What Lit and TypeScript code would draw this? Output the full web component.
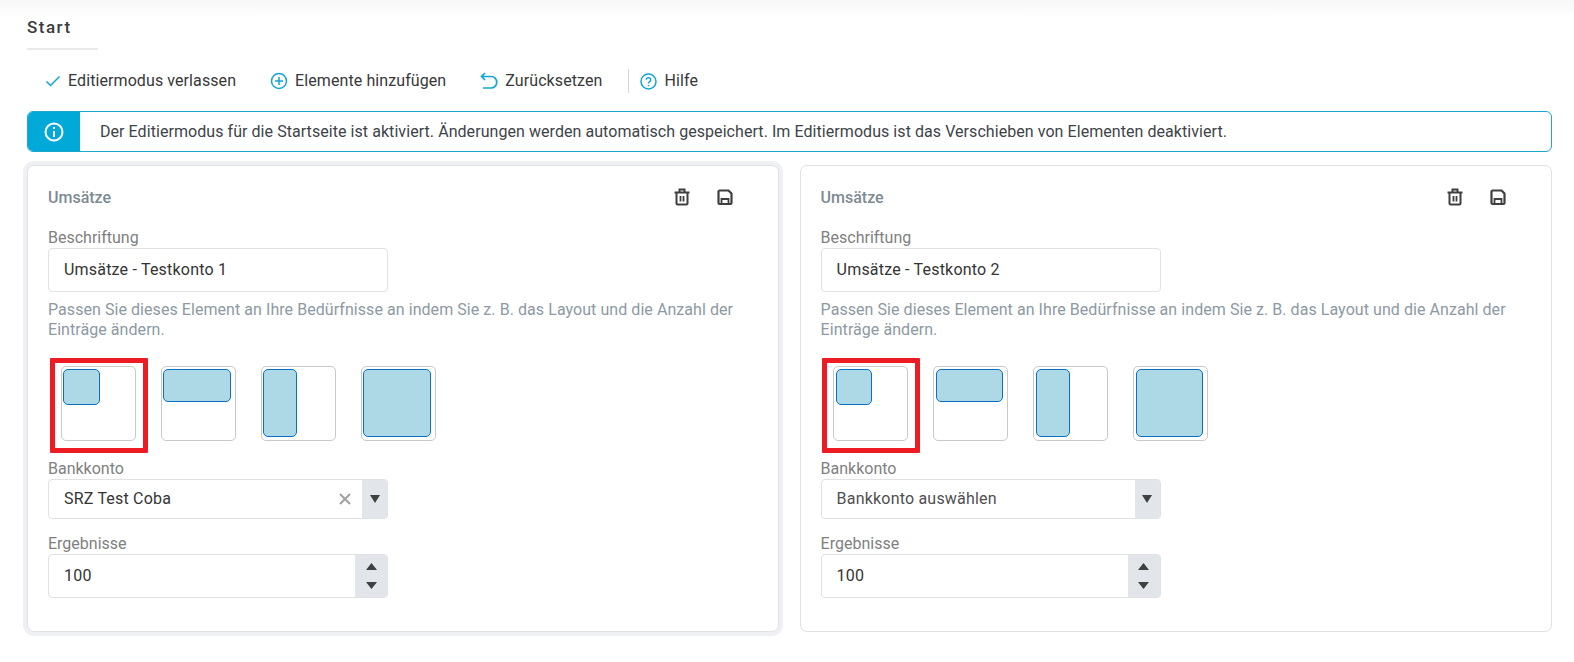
import { LitElement, html, css } from "lit";
import { customElement, property } from "lit/decorators.js";

const trash = html`<svg class="act" viewBox="0 0 18 18" width="18" height="18" fill="none" stroke="#3f3f3f" stroke-width="2"><path d="M1.500 4.500h15M6.500 4V1.500h5V4M3.500 5v10.500c0 .6.4 1 1 1h9c.6 0 1-.4 1-1V5" /><path d="M7.500 8v5.500M10.500 8v5.500" stroke-width="1.800"/></svg>`;
const save = html`<svg class="act" viewBox="0 0 18 18" width="18" height="18" fill="none" stroke="#3f3f3f" stroke-width="2.200"><path d="M3 2.500h9.500l3 3V15a1 1 0 0 1-1 1h-11a1 1 0 0 1-1-1V3.500a1 1 0 0 1 1-1Z"/><path d="M5.500 16v-5h7v5" stroke-width="1.800"/></svg>`;

const tiles = [
  ["36.500px", "36px"],
  ["67.500px", "33px"],
  ["34px", "68px"],
  ["67.500px", "68px"],
];

@customElement("edit-card")
class EditCard extends LitElement {
  @property() caption = "";
  @property() account = "";
  @property({ type: Boolean }) focused = false;

  static styles = css`
    :host { display: block; min-width: 0; }
    .card {
      box-sizing: border-box; height: 467px; padding: 20px 20px 0; background: #fff;
      border: 1px solid #dfe1e5; border-radius: 7px;
    }
    .card.focused { box-shadow: 0 0 0 4px #eef0f4; }
    .head { display: flex; align-items: center; height: 22px; margin-bottom: 20px; padding-right: 24px; }
    .head h3 { flex: 1; margin: 0; padding-top: 2px; font: 500 16px/22px Roboto, sans-serif; color: #7e8a92; }
    .act { display: block; margin-left: 25px; }
    .lbl { font: 400 16px/20px Roboto, sans-serif; color: #808080; height: 20px; }
    .input {
      box-sizing: border-box; width: 340px; height: 44px; border: 1px solid #dfe1e5; border-radius: 4px;
      display: flex; align-items: center; padding-left: 15px; font: 400 16px/20px Roboto, sans-serif; color: #343434; letter-spacing: 0.2px;
      overflow: hidden; background: #fff;
    }
    .help { margin: 8px 0 0; font: 400 16px/20px Roboto, sans-serif; letter-spacing: 0.06px; color: #8d99a3; width: 692px; height: 40px; }
    .tiles { display: flex; gap: 25px; padding: 26px 0 0 12.800px; height: 75px; margin-bottom: 18px; }
    .tile {
      position: relative; box-sizing: border-box; width: 75px; height: 75px; border: 1px solid #c9c9c9; border-radius: 5px; padding: 2px 1.500px;
    }
    .fill { box-sizing: border-box; background: #add8e6; border: 1px solid #0a70bf; border-radius: 5px; }
    .mark {
      position: absolute; left: -12px; top: -9px; width: 98px; height: 95px; box-sizing: border-box;
      border: 5px solid #ed1c24; border-radius: 1px;
    }
    .select { height: 40px; margin-bottom: 15px; padding-right: 0; justify-content: flex-start; }
    .grow { flex: 1; }
    .x { margin-right: 11px; display: block; }
    .addon { align-self: stretch; background: #e2e5ea; display: flex; flex-direction: column; align-items: center; justify-content: center; }
    .addon.one { width: 25px; }
    .addon.two { width: 32px; gap: 12px; }
    .tri { display: block; }
    .num { padding-right: 0; }
    .muted { color: #4f4f4f; }
  `;

  render() {
    return html`<div class="card ${this.focused ? "focused" : ""}">
      <div class="head"><h3>Umsätze</h3>${trash}${save}</div>
      <div class="lbl">Beschriftung</div>
      <div class="input">${this.caption}</div>
      <p class="help">Passen Sie dieses Element an Ihre Bedürfnisse an indem Sie z. B. das Layout und die Anzahl der Einträge ändern.</p>
      <div class="tiles">
        ${tiles.map(([w, h], i) => html`<div class="tile">
          <div class="fill" style="width:${w};height:${h}"></div>
          ${i === 0 ? html`<div class="mark"></div>` : ""}
        </div>`)}
      </div>
      <div class="lbl">Bankkonto</div>
      <div class="input select">
        <span class="grow ${this.account ? "" : "muted"}">${this.account || "Bankkonto auswählen"}</span>
        ${this.account ? html`<svg class="x" width="12" height="12" viewBox="0 0 12 12"><path d="M1 1l10 10M11 1L1 11" stroke="#a3a3a3" stroke-width="2.200"/></svg>` : ""}
        <div class="addon one"><svg class="tri" width="10" height="8" viewBox="0 0 10 8"><path d="M0 0h10L5 8Z" fill="#404040"/></svg></div>
      </div>
      <div class="lbl">Ergebnisse</div>
      <div class="input num">
        <span class="grow">100</span>
        <div class="addon two">
          <svg class="tri" width="11" height="7" viewBox="0 0 11 7"><path d="M0 7h11L5.500 0Z" fill="#404040"/></svg>
          <svg class="tri" width="11" height="7" viewBox="0 0 11 7"><path d="M0 0h11L5.500 7Z" fill="#404040"/></svg>
        </div>
      </div>
    </div>`;
  }
}

@customElement("app-root")
class AppRoot extends LitElement {
  static styles = css`
    :host {
      display: block; box-sizing: border-box; min-height: 662px; padding: 0 22px 0 27px;
      background: linear-gradient(#f7f7f7, #fff 18px); font-family: Roboto, sans-serif;
    }
    .title { padding-top: 17px; height: 33px; }
    .title span { display: inline-block; width: 71px; height: 31px; border-bottom: 2px solid #e9e9e9; font: 500 17px/21px Roboto, sans-serif; letter-spacing: 1.500px; color: #3c3c3c; }
    .bar { display: flex; align-items: center; height: 24px; margin: 19px 0 18px; padding-left: 18px; font: 400 16px/24px Roboto, sans-serif; letter-spacing: 0.09px; color: #383838; }
    .item { display: flex; align-items: center; gap: 7px; margin-right: 34px; }
    .item svg { display: block; }
    .item.undo { margin-right: 26px; }
    .item.last { margin: 0; padding-left: 11px; border-left: 1px solid #d5d5d5; }
    .alert {
      display: flex; box-sizing: border-box; height: 41px; border: 1px solid #1ea6cd; border-radius: 6px; overflow: hidden; background: #fff;
      font: 400 16px/39px Roboto, sans-serif; letter-spacing: 0.06px; color: #3e4348;
    }
    .alert .ico { width: 52px; background: #00a9d8; display: flex; align-items: center; justify-content: center; }
    .alert .msg { padding-left: 20px; white-space: nowrap; }
    .cols { display: grid; grid-template-columns: 1fr 1fr; gap: 20.200px; margin-top: 13px; }
  `;

  render() {
    const c = "#12a5d6";
    return html`
      <div class="title"><span>Start</span></div>
      <div class="bar">
        <div class="item"><svg width="16" height="16" viewBox="0 0 16 16" fill="none" stroke="${c}" stroke-width="1.500"><path d="M1.500 8.500l4 4 9-9"/></svg>Editiermodus verlassen</div>
        <div class="item"><svg width="18" height="18" viewBox="0 0 18 18" fill="none" stroke="${c}" stroke-width="1.500"><circle cx="9" cy="9" r="7.500"/><path d="M9 5v8M5 9h8"/></svg>Elemente hinzufügen</div>
        <div class="item undo"><svg width="18" height="18" viewBox="0 0 18 18" fill="none" stroke="${c}" stroke-width="1.700"><path d="M5 1L1.500 4.500 5 8M1.500 4.500H11a5.700 5.700 0 0 1 0 11.500H3"/></svg>Zurücksetzen</div>
        <div class="item last"><svg width="17" height="17" viewBox="0 0 17 17" fill="none" stroke="${c}" stroke-width="1.500"><circle cx="8.500" cy="8.500" r="7.500"/><path d="M6.300 6.800a2.200 2.200 0 1 1 3.400 1.900c-.8.500-1.200.9-1.200 1.800M8.500 12v1.300"/></svg>Hilfe</div>
      </div>
      <div class="alert">
        <div class="ico"><svg width="20" height="20" viewBox="0 0 20 20" fill="none" stroke="#fff" stroke-width="2"><circle cx="10" cy="10" r="8.500"/><path d="M10 9v6M10 5v2"/></svg></div>
        <div class="msg">Der Editiermodus für die Startseite ist aktiviert. Änderungen werden automatisch gespeichert. Im Editiermodus ist das Verschieben von Elementen deaktiviert.</div>
      </div>
      <div class="cols">
        <edit-card focused caption="Umsätze - Testkonto 1" account="SRZ Test Coba"></edit-card>
        <edit-card caption="Umsätze - Testkonto 2"></edit-card>
      </div>`;
  }
}
